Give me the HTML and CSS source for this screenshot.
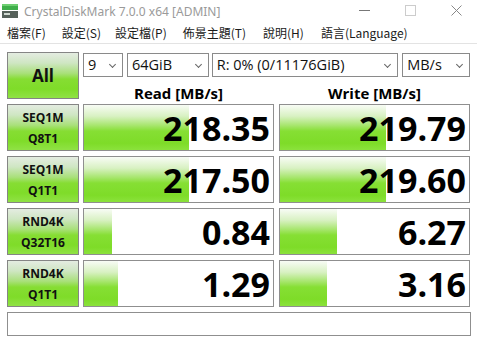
FILE: index.html
```html
<!DOCTYPE html>
<html lang="zh-Hant">
<head>
<meta charset="utf-8">
<title>CrystalDiskMark 7.0.0 x64 [ADMIN]</title>
<link rel="stylesheet" href="styles.css">
</head>
<body>
<div class="window">
  <div class="titlebar">
    <svg class="app-icon" width="16" height="14" viewBox="0 0 16 14">
      <rect x="0" y="0" width="16" height="6" fill="#3fae4a"/>
      <rect x="0" y="0" width="16" height="2" fill="#6fcf72"/>
      <rect x="0" y="7" width="16" height="7" fill="#56615a"/>
      <rect x="2" y="9" width="6" height="2" fill="#cfd8d0"/>
    </svg>
    <span class="title">CrystalDiskMark 7.0.0 x64 [ADMIN]</span>
    <div class="controls">
      <span class="ctl ctl-min"><svg width="11" height="11" viewBox="0 0 11 11"><line x1="0" y1="5.5" x2="11" y2="5.5" stroke="#777" stroke-width="1"/></svg></span>
      <span class="ctl ctl-max"><svg width="11" height="11" viewBox="0 0 11 11"><rect x="0.5" y="0.5" width="10" height="10" fill="none" stroke="#ccc" stroke-width="1"/></svg></span>
      <span class="ctl ctl-close"><svg width="11" height="11" viewBox="0 0 11 11"><path d="M0.5 0.5 L10.5 10.5 M10.5 0.5 L0.5 10.5" stroke="#888" stroke-width="1"/></svg></span>
    </div>
  </div>
  <div class="menubar">
    <span class="menu-item">檔案(F)</span>
    <span class="menu-item">設定(S)</span>
    <span class="menu-item">設定檔(P)</span>
    <span class="menu-item">佈景主題(T)</span>
    <span class="menu-item">說明(H)</span>
    <span class="menu-item">語言(Language)</span>
  </div>
  <div class="main">
    <div class="btn btn-all">All</div>
    <div class="top-controls">
      <div class="combos">
        <div class="combo combo-count"><span>9</span><i class="chev"></i></div>
        <div class="combo combo-size"><span>64GiB</span><i class="chev"></i></div>
        <div class="combo combo-drive"><span>R: 0% (0/11176GiB)</span><i class="chev"></i></div>
        <div class="combo combo-unit"><span>MB/s</span><i class="chev"></i></div>
      </div>
      <div class="headers">
        <div class="hdr hdr-read">Read [MB/s]</div>
        <div class="hdr hdr-write">Write [MB/s]</div>
      </div>
    </div>

    <div class="btn btn-test"><span>SEQ1M</span><span>Q8T1</span></div>
    <div class="result read"><div class="bar" style="width:105px"></div><span class="val">218.35</span></div>
    <div class="result write"><div class="bar" style="width:106px"></div><span class="val">219.79</span></div>

    <div class="btn btn-test"><span>SEQ1M</span><span>Q1T1</span></div>
    <div class="result read"><div class="bar" style="width:105px"></div><span class="val">217.50</span></div>
    <div class="result write"><div class="bar" style="width:106px"></div><span class="val">219.60</span></div>

    <div class="btn btn-test"><span>RND4K</span><span>Q32T16</span></div>
    <div class="result read"><div class="bar" style="width:28px"></div><span class="val">0.84</span></div>
    <div class="result write"><div class="bar" style="width:57px"></div><span class="val">6.27</span></div>

    <div class="btn btn-test"><span>RND4K</span><span>Q1T1</span></div>
    <div class="result read"><div class="bar" style="width:34px"></div><span class="val">1.29</span></div>
    <div class="result write"><div class="bar" style="width:47px"></div><span class="val">3.16</span></div>

    <div class="status"></div>
  </div>
</div>
</body>
</html>
```
FILE: styles.css
```css
html, body {
  margin: 0;
  padding: 0;
  background: #ffffff;
  overflow: hidden;
}
body {
  width: 477px;
  height: 343px;
  font-family: "Open Sans", "Noto Sans CJK TC", sans-serif;
  color: #000;
}
.window {
  width: 477px;
  height: 343px;
  background: #fff;
}
.titlebar {
  height: 23px;
  display: flex;
  align-items: center;
  position: relative;
}
.app-icon {
  margin-left: 2px;
  margin-top: -2px;
}
.title {
  margin-left: 6px;
  font-family: "Noto Sans", sans-serif;
  font-size: 12px;
  color: #9a9a9a;
  margin-top: -1px;
}
.controls {
  margin-left: auto;
  margin-right: -2px;
  display: flex;
  height: 23px;
}
.ctl {
  width: 46px;
  display: flex;
  align-items: center;
  justify-content: center;
}
.ctl svg { display: block; margin-top: -2px; }

.menubar {
  height: 20px;
  border-bottom: 1px solid #e3e3e3;
  display: flex;
  align-items: center;
  padding-left: 7px;
  font-family: "Noto Sans CJK TC", sans-serif;
  font-size: 12px;
  color: #1a1a1a;
}
.menu-item { line-height: 20px; margin-right: 16px; }
.menu-item:nth-child(2) { margin-right: 14px; }
.menu-item:nth-child(4) { margin-right: 17px; }
.menu-item:nth-child(5) { margin-right: 17px; }

.main {
  display: grid;
  grid-template-columns: 72px 191px 192px;
  grid-auto-rows: 47px;
  column-gap: 4px;
  row-gap: 5px;
  padding: 8px 0 0 7px;
}
.btn {
  box-sizing: border-box;
  border: 1px solid #858585;
  background: linear-gradient(to bottom, #e4ece1 0%, #cfe6c3 22%, #a9e07a 45%, #86dd33 58%, #7fdc29 80%, #90e245 100%);
  display: flex;
  flex-direction: column;
  align-items: center;
  justify-content: center;
  font-weight: 700;
  color: #111;
}
.btn-all {
  font-size: 17px;
  padding-bottom: 1px;
}
.btn-test {
  font-size: 12px;
  line-height: 21px;
}
.top-controls {
  grid-column: 2 / 4;
  display: flex;
  flex-direction: column;
}
.combos {
  display: flex;
  margin-top: 1px;
  height: 24px;
}
.combo {
  box-sizing: border-box;
  height: 24px;
  border: 1px solid #8a8a8a;
  background: #fff;
  display: flex;
  align-items: center;
  padding-left: 4px;
  font-size: 14.5px;
  color: #111;
  position: relative;
}
.combo span { line-height: 22px; }
.combo-count { width: 40px; margin-right: 4px; }
.combo-size { width: 82px; margin-right: 3px; }
.combo-drive { width: 187px; margin-right: 4px; }
.combo-unit { width: 68px; }
.chev {
  position: absolute;
  right: 7px;
  top: 8px;
  width: 4px;
  height: 4px;
  border-right: 1px solid #666;
  border-bottom: 1px solid #666;
  transform: rotate(45deg);
}
.headers {
  display: flex;
  flex: 1;
  align-items: center;
}
.hdr {
  font-size: 15px;
  font-weight: 700;
  text-align: center;
  padding-top: 6px;
}
.hdr-read { width: 191px; }
.hdr-write { width: 191px; margin-left: 5px; }

.result {
  box-sizing: border-box;
  border: 1px solid #8f8f8f;
  background: #fff;
  position: relative;
  display: flex;
  align-items: center;
  justify-content: flex-end;
  width: 191px;
}
.result.write { margin-left: 1px; }
.bar {
  position: absolute;
  left: 0;
  top: 0;
  bottom: 0;
  background: linear-gradient(to bottom, #f8fcf5 0%, #d8f1c2 25%, #a8e66f 45%, #86df34 58%, #7edc28 85%, #8be23c 100%);
}
.val {
  position: relative;
  font-size: 34px;
  font-weight: 700;
  padding-right: 3px;
  line-height: 45px;
  margin-top: 1px;
}
.status {
  grid-column: 1 / 4;
  box-sizing: border-box;
  border: 1px solid #8f8f8f;
  height: 24px;
  width: 464px;
}
```
